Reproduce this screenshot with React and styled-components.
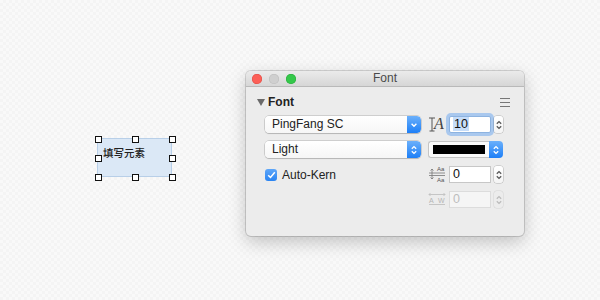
import React from "react";
import styled, { createGlobalStyle } from "styled-components";

const Global = createGlobalStyle`
  html, body { margin: 0; padding: 0; }
  body {
    width: 600px; height: 300px; overflow: hidden;
    background-color: #f9f9f9;
    background-image:
      linear-gradient(45deg, #f4f4f4 25%, transparent 25%, transparent 75%, #f4f4f4 75%),
      linear-gradient(45deg, #f4f4f4 25%, transparent 25%, transparent 75%, #f4f4f4 75%);
    background-size: 6px 6px;
    background-position: 0 0, 3px 3px;
    font-family: "Liberation Sans", "Noto Sans CJK SC", sans-serif;
  }
`;

const Canvas = styled.div`
  position: relative;
  width: 600px;
  height: 300px;
`;

const Element = styled.div`
  position: absolute;
  left: 97px;
  top: 138px;
  width: 75px;
  height: 39px;
  box-sizing: border-box;
  background: #dbe8f6;
  border: 1px solid #b8cfe8;
  padding: 8px 0 0 5px;
  font-family: "Noto Sans CJK SC", sans-serif;
  font-size: 10.5px;
  font-weight: 500;
  color: #222;
  line-height: 12px;
`;

const Handle = styled.span`
  position: absolute;
  width: 5px;
  height: 5px;
  background: #fff;
  border: 1px solid #111;
  left: ${(p) => p.$x}px;
  top: ${(p) => p.$y}px;
`;

const Window = styled.div`
  position: absolute;
  left: 246px;
  top: 71px;
  width: 278px;
  height: 165px;
  background: #ececec;
  border-radius: 5px;
  box-shadow: 0 0 0 1px rgba(0, 0, 0, 0.14), 0 6px 18px rgba(0, 0, 0, 0.22);
  overflow: hidden;
  display: flex;
  flex-direction: column;
`;

const TitleBar = styled.div`
  height: 15px;
  flex: none;
  background: linear-gradient(#ebebeb, #d6d6d6);
  border-bottom: 1px solid #b9b9b9;
  display: flex;
  align-items: center;
  position: relative;
  padding-left: 6px;
  gap: 7px;
`;

const Light = styled.span`
  width: 10px;
  height: 10px;
  border-radius: 50%;
  background: ${(p) => p.$c};
  box-shadow: inset 0 0 0 0.5px ${(p) => p.$b};
`;

const Title = styled.div`
  position: absolute;
  left: 0;
  right: 0;
  top: 0;
  bottom: 0;
  text-align: center;
  font-size: 12px;
  line-height: 15px;
  color: #4a4a4a;
  pointer-events: none;
`;

const Body = styled.div`
  padding: 8px 12px 0 11px;
  display: flex;
  flex-direction: column;
`;

const Header = styled.div`
  display: flex;
  align-items: center;
  height: 14px;
  font-size: 12px;
  font-weight: bold;
  color: #222;
  gap: 3px;
`;

const Tri = styled.span`
  width: 0;
  height: 0;
  border-left: 4px solid transparent;
  border-right: 4px solid transparent;
  border-top: 7px solid #6a6a6a;
`;

const Menu = styled.span`
  margin-left: auto;
  width: 10px;
  height: 7px;
  border-top: 1px solid #777;
  border-bottom: 1px solid #777;
  position: relative;
  margin-right: 2px;
  &::after {
    content: "";
    position: absolute;
    left: 0;
    right: 0;
    top: 3px;
    border-top: 1px solid #777;
  }
`;

const Grid = styled.div`
  display: grid;
  grid-template-columns: 156px 75px;
  column-gap: 7px;
  row-gap: 8px;
  margin-top: 7px;
  padding-left: 8px;
`;

const Popup = styled.div`
  height: 17px;
  box-sizing: border-box;
  display: flex;
  border-radius: 4px;
  background: linear-gradient(#ffffff, #f6f6f6);
  box-shadow: 0 0 0 0.5px rgba(0, 0, 0, 0.25), 0 1px 1px rgba(0, 0, 0, 0.12);
  overflow: hidden;
`;

const PopupLabel = styled.div`
  flex: 1;
  font-size: 12px;
  line-height: 17px;
  padding-left: 7px;
  color: #222;
`;

const BlueArrow = styled.div`
  width: 14px;
  background: linear-gradient(#6bb0fb, #1d7ff7);
  display: flex;
  align-items: center;
  justify-content: center;
  border-radius: ${(p) => (p.$round ? "0 4px 4px 0" : "0")};
`;

const Cell = styled.div`
  display: flex;
  align-items: center;
  gap: 3px;
  height: 17px;
`;

const IconBox = styled.div`
  width: 18px;
  height: 17px;
  display: flex;
  align-items: center;
  justify-content: center;
  flex: none;
  color: ${(p) => (p.$dim ? "#b5b5b5" : "#555")};
  position: relative;
`;

const Field = styled.div`
  width: 42px;
  height: 17px;
  box-sizing: border-box;
  border: 1px solid ${(p) => (p.$dis ? "#dcdcdc" : p.$focus ? "#8db3e0" : "#c7c7c7")};
  box-shadow: ${(p) => (p.$focus ? "0 0 0 3px #a9c8ee" : "none")};
  border-radius: ${(p) => (p.$focus ? "2px" : "0")};
  font-size: 12.5px;
  line-height: 15px;
  padding-left: 3px;
  color: ${(p) => (p.$dis ? "#bdbdbd" : "#111")};
  background: ${(p) => (p.$dis ? "#f5f5f5" : "#fff")};
`;

const Selected = styled.span`
  background: #c6ddf9;
  padding: 0 1px;
`;

const Stepper = styled.div`
  width: 9px;
  height: 17px;
  flex: none;
  display: flex;
  align-items: center;
  justify-content: center;
  margin-left: 0;
  border-radius: 3px;
  background: ${(p) => (p.$dis ? "transparent" : "linear-gradient(#fff,#f4f4f4)")};
  box-shadow: ${(p) => (p.$dis ? "0 0 0 0.5px rgba(0,0,0,0.1)" : "0 0 0 0.5px rgba(0,0,0,0.25)")};
`;

const ColorWell = styled.div`
  width: 61px;
  height: 17px;
  box-sizing: border-box;
  padding: 3px 4px;
  background: #fbfbfb;
  border: 1px solid #c5c5c5;
  border-right: none;
  border-radius: 3px 0 0 3px;
  &::after {
    content: "";
    display: block;
    height: 100%;
    background: #000;
  }
`;

const ColorCell = styled.div`
  display: flex;
  height: 17px;
`;

const CheckRow = styled.label`
  display: flex;
  align-items: center;
  gap: 5px;
  font-size: 12px;
  color: #222;
  height: 17px;
`;

const Check = styled.span`
  width: 12px;
  height: 12px;
  border-radius: 3px;
  background: linear-gradient(#5ea6f8, #2a84f2);
  display: flex;
  align-items: center;
  justify-content: center;
`;

const Tiny = styled.span`
  position: absolute;
  font-family: "Liberation Sans", sans-serif;
  font-size: ${(p) => p.$s ?? 6}px;
  line-height: 1;
  left: ${(p) => p.$x}px;
  top: ${(p) => p.$y}px;
  color: inherit;
`;

const Serif = styled.span`
  font-family: "Liberation Serif", serif;
  font-style: italic;
  font-size: 16px;
  line-height: 1;
  color: #444;
  position: absolute;
  left: 6px;
  top: 0px;
`;

const Chevron = ({ both, color = "#fff" }) => (
  <svg width="8" height="10" viewBox="0 0 8 10">
    {both ? (
      <>
        <path d="M1.8 3.8 L4 1.6 L6.2 3.8" fill="none" stroke={color} strokeWidth="1.3" />
        <path d="M1.8 6.2 L4 8.4 L6.2 6.2" fill="none" stroke={color} strokeWidth="1.3" />
      </>
    ) : (
      <path d="M1.6 3.8 L4 6.2 L6.4 3.8" fill="none" stroke={color} strokeWidth="1.4" />
    )}
  </svg>
);

const handles = [
  [-3, -3], [34, -3], [71, -3],
  [-3, 16], [71, 16],
  [-3, 35], [34, 35], [71, 35],
];

export default function App() {
  return (
    <Canvas>
      <Global />
      <Element>
        填写元素
        {handles.map(([x, y], i) => (
          <Handle key={i} $x={x} $y={y} />
        ))}
      </Element>
      <Window>
        <TitleBar>
          <Light $c="#fc5f57" $b="#de4a42" />
          <Light $c="#cfcfcf" $b="#bcbcbc" />
          <Light $c="#34c84a" $b="#27a93a" />
          <Title>Font</Title>
        </TitleBar>
        <Body>
          <Header>
            <Tri />
            Font
            <Menu />
          </Header>
          <Grid>
            <Popup>
              <PopupLabel>PingFang SC</PopupLabel>
              <BlueArrow $round>
                <Chevron />
              </BlueArrow>
            </Popup>
            <Cell>
              <IconBox>
                <svg width="18" height="17" viewBox="0 0 18 17" style={{ position: "absolute", left: 0, top: 0 }}>
                  <path d="M1 2 H7 M4 2 V15 M1.5 15 H6.5" stroke="#555" strokeWidth="1" fill="none" />
                </svg>
                <Serif>A</Serif>
              </IconBox>
              <Field $focus>
                <Selected>10</Selected>
              </Field>
              <Stepper>
                <Chevron both color="#555" />
              </Stepper>
            </Cell>

            <Popup>
              <PopupLabel>Light</PopupLabel>
              <BlueArrow $round>
                <Chevron both />
              </BlueArrow>
            </Popup>
            <ColorCell>
              <ColorWell />
              <BlueArrow $round>
                <Chevron both />
              </BlueArrow>
            </ColorCell>

            <CheckRow>
              <Check>
                <svg width="9" height="8" viewBox="0 0 9 8">
                  <path d="M1.2 4.2 L3.5 6.5 L7.8 1.2" fill="none" stroke="#fff" strokeWidth="1.5" />
                </svg>
              </Check>
              Auto-Kern
            </CheckRow>
            <Cell>
              <IconBox>
                <svg width="18" height="17" viewBox="0 0 18 17" style={{ position: "absolute", left: 0, top: 0 }}>
                  <path d="M1 7 H17 M1 9.5 H17" stroke="#777" strokeWidth="0.8" />
                  <path d="M4 3 V13 M2.5 4.5 L4 3 L5.5 4.5 M2.5 11.5 L4 13 L5.5 11.5" stroke="#777" strokeWidth="0.8" fill="none" />
                </svg>
                <Tiny $x={9} $y={0}>Aa</Tiny>
                <Tiny $x={9} $y={11}>Aa</Tiny>
              </IconBox>
              <Field>0</Field>
              <Stepper>
                <Chevron both color="#555" />
              </Stepper>
            </Cell>

            <div />
            <Cell>
              <IconBox $dim>
                <svg width="18" height="17" viewBox="0 0 18 17" style={{ position: "absolute", left: 0, top: 0 }}>
                  <path d="M1 3.5 H17 M2.5 2 L1 3.5 L2.5 5 M15.5 2 L17 3.5 L15.5 5" stroke="#bbb" strokeWidth="0.8" fill="none" />
                  <path d="M1 13.5 H17" stroke="#bbb" strokeWidth="0.8" />
                </svg>
                <Tiny $x={1} $y={6} $s={7}>A</Tiny>
                <Tiny $x={10} $y={6} $s={7}>W</Tiny>
              </IconBox>
              <Field $dis>0</Field>
              <Stepper $dis>
                <Chevron both color="#bbb" />
              </Stepper>
            </Cell>
          </Grid>
        </Body>
      </Window>
    </Canvas>
  );
}
